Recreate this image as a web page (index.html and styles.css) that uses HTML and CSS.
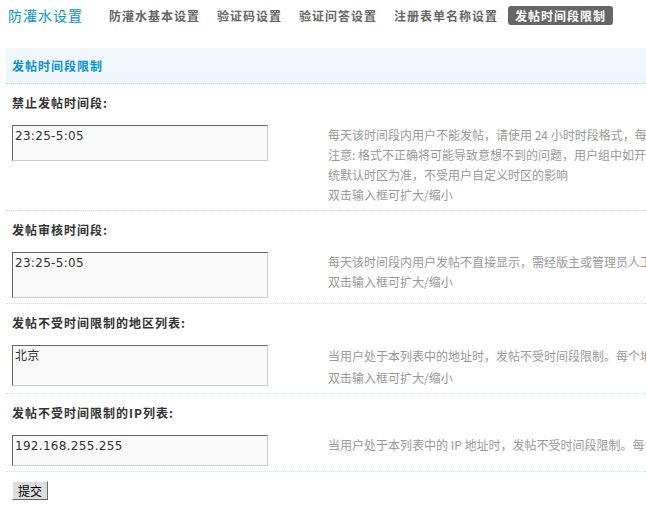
FILE: index.html
```html
<!DOCTYPE html>
<html lang="zh-CN">

<head>
    <meta charset="UTF-8">
    <meta name="viewport" content="width=device-width, initial-scale=1.0">
    <title>防灌水设置</title>
    <link rel="stylesheet" href="styles.css">
</head>

<body>

<div class="topbar">
    <h3 class="title">防灌水设置</h3>
    <ul class="tabs">
        <li><a href="#">防灌水基本设置</a></li>
        <li><a href="#">验证码设置</a></li>
        <li><a href="#">验证问答设置</a></li>
        <li><a href="#">注册表单名称设置</a></li>
        <li class="current"><a href="#">发帖时间段限制</a></li>
    </ul>
</div>

<form class="main" action="#" method="post">
    <div class="partition">发帖时间段限制</div>

    <!-- 禁止发帖时间段 -->
    <div class="setting">
        <div class="label">禁止发帖时间段:</div>
        <div class="field">
            <div class="control"><textarea class="t1">23:25-5:05</textarea></div>
            <div class="tips">
                每天该时间段内用户不能发帖，请使用 24 小时时段格式，每个时间段用 "-" 连接，多个时间段间用回车分隔<br>
                注意: 格式不正确将可能导致意想不到的问题，用户组中如开启了"不受时间段限制"选项，所有时间段设置均以系<br>
                统默认时区为准，不受用户自定义时区的影响<br>
                双击输入框可扩大/缩小
            </div>
        </div>
    </div>

    <!-- 发帖审核时间段 -->
    <div class="setting">
        <div class="label">发帖审核时间段:</div>
        <div class="field">
            <div class="control"><textarea class="t2">23:25-5:05</textarea></div>
            <div class="tips">
                每天该时间段内用户发帖不直接显示，需经版主或管理员人工审核才能发表，格式和用法同上<br>
                双击输入框可扩大/缩小
            </div>
        </div>
    </div>

    <!-- 地区列表 -->
    <div class="setting setting-tight">
        <div class="label">发帖不受时间限制的地区列表:</div>
        <div class="field">
            <div class="control"><textarea class="t3">北京</textarea></div>
            <div class="tips tips-loose">
                当用户处于本列表中的地址时，发帖不受时间段限制。每个地址一行，例如 "北京"(不含引号)<br>
                双击输入框可扩大/缩小
            </div>
        </div>
    </div>

    <!-- IP列表 -->
    <div class="setting">
        <div class="label">发帖不受时间限制的IP列表:</div>
        <div class="field">
            <div class="control"><textarea class="t4">192.168.255.255</textarea></div>
            <div class="tips">
                当用户处于本列表中的 IP 地址时，发帖不受时间段限制。每个 IP 一行，既可输入完整地址，也可只输入 IP 开头
            </div>
        </div>
    </div>

    <div class="submit">
        <button type="submit" class="btn">提交</button>
    </div>
</form>

</body>

</html>
```

FILE: styles.css
```css
body {
    font-family: "Noto Sans CJK SC", "Liberation Sans", sans-serif;
    font-size: 12px;
    margin: 0;
    padding: 0;
    background-color: #fff;
    color: #333;
    overflow: hidden;
}

/* Kopfzeile mit Reitern */
.topbar {
    display: flex;
    align-items: flex-start;
    height: 48px;
    padding: 6px 0 0 8px;
    box-sizing: border-box;
}

.title {
    margin: 0 19px 0 0;
    font-size: 14px;
    font-weight: normal;
    letter-spacing: 1px;
    line-height: 19px;
    color: #0a93cf;
}

.tabs {
    display: flex;
    gap: 3px;
    margin: 0;
    padding: 0;
    list-style: none;
}

.tabs a {
    display: block;
    padding: 0 7px;
    line-height: 19px;
    font-weight: bold;
    letter-spacing: 1px;
    color: #666;
    text-decoration: none;
    border-radius: 3px;
}

.tabs .current a {
    background-color: #666;
    color: #fff;
}

/* Inhalt */
.main {
    margin: 0 0 0 6px;
}

.partition {
    height: 35px;
    line-height: 35px;
    padding-left: 6px;
    font-weight: bold;
    letter-spacing: 1px;
    color: #0a93cf;
    background: linear-gradient(#f1f8fd, #eef6fc);
    border-bottom: 1px dotted #bcd9ea;
}

.setting {
    border-bottom: 1px dotted #c9e0ee;
    padding-bottom: 5px;
}

.setting-tight {
    padding-bottom: 4px;
}

.label {
    padding: 10px 6px 0;
    line-height: 18px;
    font-weight: bold;
    letter-spacing: 1px;
    color: #333;
}

.field {
    display: flex;
    align-items: flex-start;
    padding-top: 13px;
}

.control {
    width: 316px;
    flex: none;
    padding-left: 6px;
}

.control textarea {
    display: block;
    width: 256px;
    box-sizing: border-box;
    margin: 0;
    padding: 2px 2px;
    border: 1px solid;
    border-color: #666 #ccc #ccc #666;
    background-color: #f9f9f9;
    font-family: "DejaVu Sans", "Noto Sans CJK SC", sans-serif;
    font-size: 12px;
    letter-spacing: 0.3px;
    line-height: 16px;
    color: #333;
    resize: none;
    overflow: hidden;
}

.t1 { height: 36px; }
.t2 { height: 46px; }
.t3 { height: 41px; }
.t4 { height: 31px; }

.tips {
    flex: 1;
    min-width: 0;
    line-height: 20px;
    color: #999;
    white-space: nowrap;
    overflow: hidden;
}

.tips-loose {
    line-height: 22px;
}

.submit {
    padding: 9px 6px 0;
}

.btn {
    display: block;
    margin: 0;
    padding: 1px 5px;
    font-family: "Noto Sans CJK SC", sans-serif;
    font-size: 12px;
    line-height: 15px;
    color: #000;
    background-color: #ddd;
    border: 1px solid;
    border-color: #fff #666 #666 #fff;
}
```
